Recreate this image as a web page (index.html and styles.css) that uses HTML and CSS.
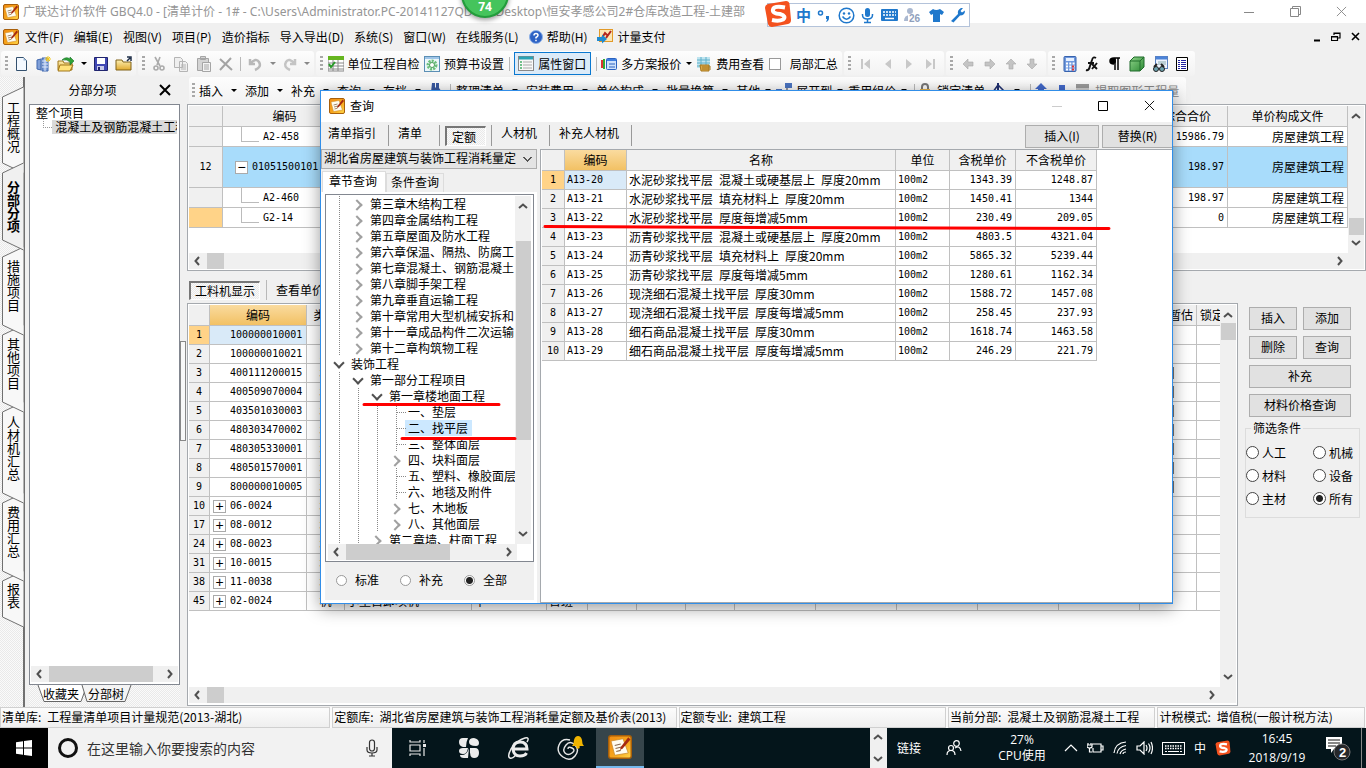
FILE: index.html
```html
<!DOCTYPE html>
<html lang="zh-CN">
<head>
<meta charset="utf-8">
<title>广联达计价软件 GBQ4.0</title>
<link rel="stylesheet" href="styles.css">
</head>
<body>
<svg class="defs" width="0" height="0" aria-hidden="true">
  <defs>
    <linearGradient id="gold" x1="0" y1="0" x2="1" y2="1"><stop offset="0" stop-color="#f08c12"/><stop offset=".55" stop-color="#f7a51c"/><stop offset="1" stop-color="#ffd84a"/></linearGradient>
    <linearGradient id="folder" x1="0" y1="0" x2="0" y2="1"><stop offset="0" stop-color="#fdf0b4"/><stop offset="1" stop-color="#e0a92e"/></linearGradient>
    <linearGradient id="green" x1="0" y1="0" x2="1" y2="1"><stop offset="0" stop-color="#8fd48a"/><stop offset="1" stop-color="#2c8a34"/></linearGradient>
  </defs>
  <symbol id="app" viewBox="0 0 16 16"><rect x=".5" y=".5" width="15" height="15" rx="1.5" fill="url(#gold)" stroke="#a85f0a"/><path d="M2 4l8-1.500 3.500 9.500-9 1.500z" fill="#fffdf0" stroke="#c98a2a" stroke-width=".5"/><path d="M4.500 7l4-1M5 9l4-1M5.500 11l3-.8" stroke="#8a6a50" stroke-width=".8"/><path d="M13.500 1.500L8.500 8 8 10l1.800-1L15 3z" fill="#a52a12"/></symbol>
  <symbol id="left" viewBox="0 0 8 10"><path d="M6 1L2.500 5 6 9" fill="none" stroke="#505050" stroke-width="2"/></symbol>
  <symbol id="right" viewBox="0 0 8 10"><path d="M2 1l3.500 4L2 9" fill="none" stroke="#505050" stroke-width="2"/></symbol>
  <symbol id="up" viewBox="0 0 10 8"><path d="M1 6l4-3.500L9 6" fill="none" stroke="#505050" stroke-width="2"/></symbol>
  <symbol id="down" viewBox="0 0 10 8"><path d="M1 2l4 3.500L9 2" fill="none" stroke="#505050" stroke-width="2"/></symbol>
  <symbol id="close" viewBox="0 0 12 12"><path d="M1 1l10 10M11 1L1 11" fill="none" stroke="currentColor"/></symbol>
  <symbol id="arrow" viewBox="0 0 12 12"><path d="M1 6l5-5v3h5v4H6v3z" fill="#c4c4c4" stroke="#a8a8a8" stroke-width=".6"/></symbol>
  <symbol id="sogou" viewBox="0 0 28 28"><path d="M4 4L22 1q3 0 3.500 3L27 20q0 3-3 4L8 27q-3 0-4-3L1 8q0-3 3-4z" fill="#f4511e"/><path d="M21 7.500q-11-2-12 2t7 4.500q7 2 3 5.500-4 2-11 .5" fill="none" stroke="#fff" stroke-width="4"/></symbol>
</svg>

<header class="titlebar">
  <svg class="i16"><use href="#app"/></svg>
  <span class="caption">广联达计价软件 GBQ4.0 - [清单计价 - 1# - C:\Users\Administrator.PC-20141127QDCM\Desktop\恒安孝感公司2#仓库改造工程-土建部</span>
  <div class="win-controls">
    <button aria-label="最小化"><svg width="10" height="10"><path d="M0 5.500h10" stroke="#888"/></svg></button>
    <button aria-label="还原"><svg width="11" height="11"><path d="M.5 2.500h8v8h-8zM2.500 2.500v-2h8v8h-2" fill="none" stroke="#888"/></svg></button>
    <button aria-label="关闭"><svg width="11" height="11"><use href="#close"/></svg></button>
  </div>
</header>

<div class="speed-badge">74</div>
<div class="ime">
  <svg class="ime-logo" width="30" height="28"><use href="#sogou"/></svg>
  <b>中</b>
  <svg width="14" height="14"><circle cx="3.500" cy="5" r="2" fill="none" stroke="#1f78cc" stroke-width="1.500"/><path d="M9 8h3v2q0 3-3 4 1-2 1-3H9z" fill="#1f78cc"/></svg>
  <svg width="17" height="17"><circle cx="8.500" cy="8.500" r="7.300" fill="none" stroke="#1f78cc" stroke-width="1.500"/><circle cx="6" cy="6.500" r="1.200" fill="#1f78cc"/><circle cx="11" cy="6.500" r="1.200" fill="#1f78cc"/><path d="M4.500 9.500q4 5.500 8 0" fill="none" stroke="#1f78cc" stroke-width="1.500"/></svg>
  <svg width="13" height="17"><rect x="4" y="1" width="5" height="9" rx="2.500" fill="#1f78cc"/><path d="M1.500 7v1q0 4 5 4t5-4V7M6.500 12v3M3 15.500h7" fill="none" stroke="#1f78cc" stroke-width="1.500"/></svg>
  <svg width="17" height="12"><rect width="17" height="12" rx="1" fill="#1f78cc"/><path d="M2 3h13M2 6h13" stroke="#fff" stroke-width="1.500" stroke-dasharray="2 1"/><path d="M4 9.500h9" stroke="#fff" stroke-width="1.500"/></svg>
  <svg width="18" height="16"><circle cx="6" cy="4" r="3" fill="#aab8d0"/><path d="M0 14q0-6 6-6 2 0 3 1v5z" fill="#aab8d0"/><path d="M4 7h14v9H4z" fill="#fff"/><text x="5" y="15" class="ime-num">26</text></svg>
  <svg width="15" height="15"><path d="M4 1q3 2 7 0l4 3-2 3-2-1v8H4V6L2 7 0 4z" fill="#1f78cc"/></svg>
  <svg width="15" height="15"><path d="M1 13l7-7q-1-4 3-6l2 0-2.500 3 1.500 1.500L15 2.500q0 5-5 5l-6.500 7z" fill="#1f78cc"/></svg>
</div>

<nav class="menubar">
  <svg class="i16"><use href="#app"/></svg>
  <button>文件(F)</button><button>编辑(E)</button><button>视图(V)</button><button>项目(P)</button><button>造价指标</button><button>导入导出(D)</button><button>系统(S)</button><button>窗口(W)</button><button>在线服务(L)</button>
  <button><svg width="14" height="14"><circle cx="7" cy="7" r="6.500" fill="#2d62c4" stroke="#8fb2e8"/><path d="M5 5.500q0-2 2-2t2 1.800q0 1-2 2.200v1M7 9.800v1.400" fill="none" stroke="#fff" stroke-width="1.500"/></svg>帮助(H)</button>
  <button><svg width="16" height="16"><rect x="2.500" y=".5" width="13" height="12" fill="#fbe6b4" stroke="#e29a28"/><path d="M5 9l3-5 2 2M14 2L9 9" fill="none" stroke="#b3261e" stroke-width="2"/><path d="M0 8h5V5.500l5 4.500-5 4.500V12H0z" fill="#1f8ad0"/></svg>计量支付</button>
  <div class="mdi">
    <button aria-label="最小化文档"><svg width="8" height="10"><path d="M1 8.500h6" stroke="#000" stroke-width="2"/></svg></button>
    <button aria-label="还原文档"><svg width="10" height="10"><path d="M3 3V1h6v5H7M3 1.500h6M.5 4.500h6v4h-6zM0 5h7" fill="none" stroke="#000" stroke-width="1.200"/></svg></button>
    <button aria-label="关闭文档"><svg width="9" height="9"><path d="M1 1l7 7M8 1L1 8" stroke="#000" stroke-width="1.600"/></svg></button>
  </div>
</nav>

<div class="toolbar">
  <div class="group g1"><i class="grip"></i>
    <button aria-label="新建"><svg class="i16"><path d="M2.500 1.500h7l3 3v10h-10z" fill="#f4f9ff" stroke="#33506e"/><path d="M9.500 1.500v3h3z" fill="#9bb7d4"/></svg></button>
    <button aria-label="新建项目"><svg class="i16"><path d="M1 4l4-1v11l-4-1zM6 2h6v13H6z" fill="#7f9fd8" stroke="#3f67ae"/><path d="M6 5h6M6 8h6M6 11h6M9 2v13" stroke="#dfe9fb"/><path d="M12 0v6M9 3h6M10 1l4 4M14 1l-4 4" stroke="#f2c81c"/></svg></button>
    <button aria-label="打开"><svg width="18" height="16"><path d="M1 5h5l1 2h8v7H1z" fill="url(#folder)" stroke="#a0761a"/><path d="M3 9h13l-3 6H1z" fill="#ffe27a" stroke="#a0761a"/><path d="M5 4q4-4 8-1V1l4 4-4 4V6q-3-3-8-2z" fill="#2ea336" stroke="#17702a" stroke-width=".6"/></svg></button>
    <i class="caret"></i>
    <button aria-label="保存"><svg class="i16"><path d="M1.500 1.500h13v13h-13z" fill="#4148b4" stroke="#20246e"/><rect x="4" y="2" width="8" height="6" fill="#fff"/><rect x="4" y="10" width="7" height="4" fill="#c9cbe9"/><rect x="5" y="11" width="2" height="3" fill="#20246e"/></svg></button>
    <button aria-label="目录"><svg width="17" height="16"><path d="M1 4h6l1 2h8v8H1z" fill="url(#folder)" stroke="#806218"/><path d="M12 5l3-3M12 1h4v4" stroke="#20304a" fill="none" stroke-width="1.500"/></svg></button>
  </div>
  <div class="group g2"><i class="grip"></i>
    <button aria-label="剪切"><svg class="i16" stroke="#ababab" fill="none" stroke-width="1.600"><path d="M4 1l5 9M9 1L6 9"/><circle cx="5" cy="12" r="2"/><circle cx="11" cy="12" r="2"/></svg></button>
    <button aria-label="复制"><svg class="i16" stroke="#b4b4b4" fill="#efefef"><path d="M1.500 1.500h6l2 2v8h-8zM6.500 5.500h6l2 2v8h-8z"/><path d="M8 9h5M8 11h5M8 13h5"/></svg></button>
    <button aria-label="粘贴"><svg class="i16" stroke="#a5a5a5" fill="#d4d4d4"><path d="M1.500 2.500h11v12h-11zM4.500.5h5v3h-5z"/><path d="M6.500 6.500h8v9h-8z" fill="#f4f4f4"/><path d="M8 9h5M8 11h5M8 13h5"/></svg></button>
    <button aria-label="删除"><svg class="i16"><path d="M2 3l12 11M13 2L2 14" stroke="#a4a4a4" stroke-width="2"/></svg></button>
    <i class="sep"></i>
    <button aria-label="撤销"><svg class="i16"><path d="M3 3v5h5M3 8q6-7 9-2t-4 8" fill="none" stroke="#b8b8b8" stroke-width="2.500"/></svg></button><i class="caret dim"></i>
    <button aria-label="重做"><svg class="i16"><path d="M13 3v5H8M13 8Q7 1 4 6t4 8" fill="none" stroke="#c4c4c4" stroke-width="2.500"/></svg></button><i class="caret dim"></i>
  </div>
  <div class="group g3"><i class="grip"></i>
    <button class="lbl"><svg class="i16"><rect y="1" width="16" height="14" fill="#fff" stroke="#888"/><rect width="16" height="4" fill="#65b51f"/><path d="M0 7h16M0 10h16M0 13h16M5 4v11M10 4v11" stroke="#888"/><path d="M1 8l2 3 4-5" stroke="#299a29" stroke-width="2" fill="none"/></svg>单位工程自检</button>
    <button class="lbl"><svg class="i16"><rect x=".5" y=".5" width="15" height="15" fill="#edf7fa" stroke="#5b8fb5"/><path d="M1 2h14" stroke="#9fc5e8" stroke-width="2"/><circle cx="8" cy="9" r="4" fill="none" stroke="#6abf7a" stroke-width="3" stroke-dasharray="2 1"/><circle cx="8" cy="9" r="2.500" fill="#fff" stroke="#4aa05a"/></svg>预算书设置</button>
    <i class="sep"></i>
    <button class="lbl pressed"><svg class="i16"><rect x=".5" y=".5" width="15" height="14" fill="#f8f8f8" stroke="#888"/><path d="M1 2h14" stroke="#29a3b5" stroke-width="3"/><path d="M2 6h2M2 9h2M2 12h2" stroke="#46ad67" stroke-width="1.500"/><path d="M5 6h9M5 9h9M5 12h9" stroke="#aaa"/></svg>属性窗口</button>
    <i class="sep"></i>
    <button class="lbl"><svg class="i16"><path d="M1 4v8" stroke="#d33" stroke-width="2"/><path d="M3 3v10" stroke="#3a3" stroke-width="2"/><rect x="5.500" y="2.500" width="10" height="11" rx="1" fill="#cfe2fb" stroke="#2a62c0"/><path d="M6 4h9" stroke="#3f7fe0" stroke-width="2"/><path d="M8 8h6M8 11h6" stroke="#2a62c0"/></svg>多方案报价</button><i class="caret"></i>
    <button class="lbl"><svg class="i16"><rect x="1" y="1" width="13" height="11" fill="#bfe4ef"/><path d="M1 4h13M1 7h13M1 10h13M5 1v11M10 1v11" stroke="#5fb0ca"/><path d="M4 9h9v6H5z" fill="#dba948" stroke="#a6761c"/><path d="M6 11h9M6 13h9" stroke="#a6761c"/></svg>费用查看</button>
    <label class="lbl"><input type="checkbox" class="box">局部汇总</label>
  </div>
  <div class="group g4"><i class="grip"></i>
    <button aria-label="首条"><svg class="i12" fill="#c8c8c8"><path d="M1 1h2v10H1zM10 1v10L4 6z"/></svg></button>
    <button aria-label="上一条"><svg class="i12" fill="#c8c8c8"><path d="M9 1v10L3 6z"/></svg></button>
    <button aria-label="下一条"><svg class="i12" fill="#c8c8c8"><path d="M3 1v10l6-5z"/></svg></button>
    <button aria-label="末条"><svg class="i12" fill="#c8c8c8"><path d="M9 1h2v10H9zM2 1v10l6-5z"/></svg></button>
  </div>
  <div class="group g4"><i class="grip"></i>
    <button aria-label="左移"><svg class="i12"><use href="#arrow"/></svg></button>
    <button aria-label="右移"><svg class="i12 r180"><use href="#arrow"/></svg></button>
    <button aria-label="上移"><svg class="i12 r90"><use href="#arrow"/></svg></button>
    <button aria-label="下移"><svg class="i12 r270"><use href="#arrow"/></svg></button>
  </div>
  <div class="group g5"><i class="grip"></i>
    <button aria-label="计算器"><svg class="i16"><rect x="2" y=".5" width="12" height="15" rx="1" fill="#6f98dd" stroke="#3762ad"/><rect x="4" y="2" width="8" height="3" fill="#e6f0ff"/><path d="M4 7.500h9M4 10.500h9M4 13.500h9" stroke="#fff" stroke-width="2" stroke-dasharray="2 1.300"/><path d="M10 10.500h2M10 13.500h2" stroke="#d33" stroke-width="2"/></svg></button>
    <button aria-label="函数"><svg class="i16"><path d="M2 14q3 1 4-4l2-6q1-4 4-2M4 7h6M8 8l5 5M13 7l-5 6" fill="none" stroke="#111" stroke-width="1.900"/></svg></button>
    <button aria-label="段落"><svg class="i16"><path d="M7 8Q3 8 3 5t4-3h6M8 2v12M11 2v12" fill="none" stroke="#000" stroke-width="1.500"/><circle cx="6" cy="5" r="3"/></svg></button>
    <button aria-label="立方体"><svg class="i16"><path d="M1 5l4-4h10v10l-4 4H1z" fill="url(#green)" stroke="#1f6a2a"/><path d="M1 5h10v10M11 5l4-4" fill="none" stroke="#226f2d"/></svg></button>
    <button aria-label="查找"><svg class="i16"><rect x="3.500" y=".5" width="12" height="12" fill="#edf3ff" stroke="#5a80bd"/><path d="M4 2h11" stroke="#4b83d8" stroke-width="3"/><path d="M6 6h8M6 8h8" stroke="#8aa"/><circle cx="4" cy="13" r="2.500" fill="#6da3b0" stroke="#222"/><circle cx="10" cy="13" r="2.500" fill="#6da3b0" stroke="#222"/><path d="M2 11l3-3M12 11l-3-3" stroke="#222" stroke-width="2"/></svg></button>
    <button aria-label="列表"><svg class="i16"><path d="M2.500 1.500h11v13h-11z" fill="#fff" stroke="#000"/><path d="M4 4.500h2M4 6.500h2M4 8.500h2M4 10.500h2M4 12.500h2M7 4.500h5M7 6.500h5M7 8.500h5M7 10.500h5M7 12.500h5" stroke="#2020a0"/></svg></button>
  </div>
</div>

<main class="work">
  <aside class="side-tabs">
    <svg class="tab-shapes" width="24" height="560" fill="#f8f8f8" stroke="#707070">
      <path d="M23.500 484L2.500 494V530L23.500 540"/><path d="M23.500 406L2.500 416V484L23.500 494"/><path d="M23.500 315L2.500 325V406L23.500 416"/><path d="M23.500 238L2.500 248V315L23.500 325"/><path d="M23.500 160L2.500 170V238L23.500 248"/><path d="M23.500 0L2.500 10V76L23.500 86"/>
      <path d="M23.500 76L2.500 86V153L23.500 163" fill="#f0f0f0"/>
    </svg>
    <button class="t80">工程概况</button><button class="t80 on">分部分项</button><button class="t78">措施项目</button><button class="t78">其他项目</button><button class="t90">人材机汇总</button><button class="t78">费用汇总</button><button class="t50">报表</button>
  </aside>

  <section class="outline">
    <h2>分部分项<button aria-label="关闭面板"><svg width="12" height="12"><path d="M1 1l10 10M11 1L1 11" stroke="#000" stroke-width="2"/></svg></button></h2>
    <div class="outline-box">
      <ul><li>整个项目<ul><li><span>混凝土及钢筋混凝土工程</span></li></ul></li></ul>
      <div class="hscroll"><svg class="ah"><use href="#left"/></svg><i class="thumb t103"></i><svg class="ah end"><use href="#right"/></svg></div>
    </div>
    <div class="sheet-tabs">
      <svg width="100" height="18" fill="#f4f4f4" stroke="#666"><path d="M1 0l6 16.500h37L50 0" fill="#fff"/><path d="M45 0l5 16.500h38L94 0"/></svg>
      <button>收藏夹</button><button>分部树</button>
    </div>
  </section>
  <div class="splitter"><i></i></div>

  <section class="content">
    <div class="toolbar second">
      <i class="grip"></i>
      <button class="dd">插入</button><button class="dd">添加</button><button class="dd">补充</button><button class="dd">查询</button><button class="dd">存档</button>
      <button aria-label="查找"><svg class="i16" fill="#3858a0"><path d="M3 0h3v4l1 1V0h3v5l3 4v4H9v-4H7v4H2v-4z"/></svg></button><i class="sep"></i>
      <button class="dd">整理清单</button><button class="dd">安装费用</button><button class="dd">单价构成</button><button class="dd">批量换算</button><button class="dd tight">其他</button>
      <button class="dd tight"><svg class="i16"><rect x="9" y="0" width="7" height="5" fill="#4a73c0"/><rect x="0" y="6" width="6" height="6" fill="#4a73c0"/><path d="M6 8h5M11 5v6" stroke="#334"/></svg>展开到</button><button class="dd tight">重用组价</button><i class="sep slim"></i>
      <button class="ic"><svg class="i16"><path d="M5 8V4q0-3 3-3t3 3v4" fill="none" stroke="#777" stroke-width="2"/><rect x="3" y="6" width="10" height="8" fill="#e2b04a"/></svg>锁定清单</button>
      <button class="dd" aria-label="填充"><svg class="i16"><path d="M3 9l5-7 6 6-6 6z" fill="#fff" stroke="#203070" stroke-width="1.500"/><path d="M8 0v7M13 8l2 5" stroke="#203070" stroke-width="2"/></svg></button><i class="sep slim"></i>
      <button class="ic" aria-label="上移"><svg class="i16"><path d="M8 0l6 6h-3v6H5V6H2z" fill="#4268c8"/></svg></button>
      <button class="ic" aria-label="下移"><svg class="i16"><path d="M8 14L2 9h3V2h6v7h3z" fill="#4268c8"/></svg></button>
      <button class="ic off"><svg class="i16"><path d="M1 1h13v13H1z" fill="#ccc"/><path d="M1 3h13" stroke="#999" stroke-width="4"/></svg>提取图形工程量</button>
    </div>

    <div class="grid-box top-grid">
      <div class="grid-view">
        <table class="sheet">
          <colgroup><col class="c33"><col class="c124"><col><col class="c119"><col class="c120"></colgroup>
          <thead><tr><th></th><th>编码</th><th></th><th class="total">综合合价</th><th>单价构成文件</th></tr></thead>
          <tbody>
            <tr><th></th><td class="kid last">A2-458</td><td></td><td class="r n">15986.79</td><td class="r">房屋建筑工程</td></tr>
            <tr class="tall sel"><th>12</th><td class="root"><button class="pm" aria-label="折叠">−</button>01051500101</td><td></td><td class="r n">198.97</td><td class="r">房屋建筑工程</td></tr>
            <tr><th></th><td class="kid">A2-460</td><td></td><td class="r n">198.97</td><td class="r">房屋建筑工程</td></tr>
            <tr><th class="cur"></th><td class="kid last">G2-14</td><td></td><td class="r n">0</td><td class="r">房屋建筑工程</td></tr>
          </tbody>
        </table>
      </div>
      <div class="vscroll"><svg class="av"><use href="#up"/></svg><i class="thumb end"></i><svg class="av"><use href="#down"/></svg></div>
      <div class="hscroll"><svg class="ah"><use href="#left"/></svg><i class="thumb t17"></i><svg class="ah end"><use href="#right"/></svg></div>
    </div>

    <div class="view-bar"><button class="down">工料机显示</button><i class="sep"></i><button>查看单价</button></div>

    <div class="lower">
      <div class="grid-box bottom-grid">
        <div class="grid-view">
          <table class="sheet low">
            <colgroup><col class="c20"><col class="c97"><col class="c38"><col class="c127"><col class="c75"><col class="c41"><col class="c49"><col class="c49"><col class="c49"><col class="c81"><col class="c81"><col class="c81"><col class="c81"><col class="c81"><col class="c57"><col></colgroup>
            <thead><tr><th></th><th class="hot">编码</th><th>类别</th><th></th><th></th><th></th><th></th><th></th><th></th><th></th><th></th><th></th><th></th><th></th><th class="r">是否暂估</th><th class="lock">锁定</th></tr></thead>
            <tbody>
              <tr><th class="cur">1</th><td class="code hit">100000010001</td><td>人</td><td></td><td></td><td></td><td></td><td></td><td></td><td></td><td></td><td></td><td></td><td></td><td></td><td></td></tr>
              <tr><th>2</th><td class="code">100000010021</td><td>人</td><td></td><td></td><td></td><td></td><td></td><td></td><td></td><td></td><td></td><td></td><td></td><td></td><td></td></tr>
              <tr><th>3</th><td class="code">400111200015</td><td>材</td><td></td><td></td><td></td><td></td><td></td><td></td><td></td><td></td><td></td><td></td><td></td><td><input type="checkbox" class="box" aria-label="暂估 3"></td><td></td></tr>
              <tr><th>4</th><td class="code">400509070004</td><td>材</td><td></td><td></td><td></td><td></td><td></td><td></td><td></td><td></td><td></td><td></td><td></td><td><input type="checkbox" class="box" aria-label="暂估 4"></td><td></td></tr>
              <tr><th>5</th><td class="code">403501030003</td><td>材</td><td></td><td></td><td></td><td></td><td></td><td></td><td></td><td></td><td></td><td></td><td></td><td><input type="checkbox" class="box" aria-label="暂估 5"></td><td></td></tr>
              <tr><th>6</th><td class="code">480303470002</td><td>材</td><td></td><td></td><td></td><td></td><td></td><td></td><td></td><td></td><td></td><td></td><td></td><td><input type="checkbox" class="box" aria-label="暂估 6"></td><td></td></tr>
              <tr><th>7</th><td class="code">480305330001</td><td>材</td><td></td><td></td><td></td><td></td><td></td><td></td><td></td><td></td><td></td><td></td><td></td><td><input type="checkbox" class="box" aria-label="暂估 7"></td><td></td></tr>
              <tr><th>8</th><td class="code">480501570001</td><td>材</td><td></td><td></td><td></td><td></td><td></td><td></td><td></td><td></td><td></td><td></td><td></td><td><input type="checkbox" class="box" aria-label="暂估 8"></td><td></td></tr>
              <tr><th>9</th><td class="code">800000010005</td><td>材</td><td></td><td></td><td></td><td></td><td></td><td></td><td></td><td></td><td></td><td></td><td></td><td><input type="checkbox" class="box" aria-label="暂估 9"></td><td></td></tr>
              <tr><th>10</th><td class="code"><button class="pm" aria-label="展开">+</button>06-0024</td><td>机</td><td></td><td></td><td></td><td></td><td></td><td></td><td></td><td></td><td></td><td></td><td></td><td></td><td></td></tr>
              <tr><th>17</th><td class="code"><button class="pm" aria-label="展开">+</button>08-0012</td><td>机</td><td></td><td></td><td></td><td></td><td></td><td></td><td></td><td></td><td></td><td></td><td></td><td></td><td></td></tr>
              <tr><th>24</th><td class="code"><button class="pm" aria-label="展开">+</button>08-0023</td><td>机</td><td></td><td></td><td></td><td></td><td></td><td></td><td></td><td></td><td></td><td></td><td></td><td></td><td></td></tr>
              <tr><th>31</th><td class="code"><button class="pm" aria-label="展开">+</button>10-0015</td><td>机</td><td></td><td></td><td></td><td></td><td></td><td></td><td></td><td></td><td></td><td></td><td></td><td></td><td></td></tr>
              <tr><th>38</th><td class="code"><button class="pm" aria-label="展开">+</button>11-0038</td><td>机</td><td></td><td></td><td></td><td></td><td></td><td></td><td></td><td></td><td></td><td></td><td></td><td></td><td></td></tr>
              <tr><th>45</th><td class="code"><button class="pm" aria-label="展开">+</button>02-0024</td><td>机</td><td class="l">小型自卸项机</td><td class="l">中</td><td class="l">台班</td><td></td><td></td><td></td><td></td><td></td><td></td><td></td><td></td><td></td><td></td></tr>
            </tbody>
          </table>
        </div>
        <div class="vscroll"><svg class="av"><use href="#up"/></svg><i class="thumb"></i><svg class="av end"><use href="#down"/></svg></div>
        <div class="hscroll"><svg class="ah"><use href="#left"/></svg><i class="thumb t17"></i><svg class="ah end"><use href="#right"/></svg></div>
      </div>

      <aside class="actions">
        <div class="action-grid">
          <button class="btn">插入</button><button class="btn">添加</button>
          <button class="btn">删除</button><button class="btn">查询</button>
          <button class="btn wide">补充</button>
          <button class="btn wide">材料价格查询</button>
        </div>
        <fieldset><legend>筛选条件</legend>
          <label><input type="radio" name="kind">人工</label><label><input type="radio" name="kind">机械</label>
          <label><input type="radio" name="kind">材料</label><label><input type="radio" name="kind">设备</label>
          <label><input type="radio" name="kind">主材</label><label><input type="radio" name="kind" checked>所有</label>
        </fieldset>
      </aside>
    </div>
  </section>
</main>

<div class="status">
  <span>清单库:&ensp;工程量清单项目计量规范(2013-湖北)</span><span>定额库:&ensp;湖北省房屋建筑与装饰工程消耗量定额及基价表(2013)</span><span>定额专业:&ensp;建筑工程</span><span>当前分部:&ensp;混凝土及钢筋混凝土工程</span><span>计税模式:&ensp;增值税(一般计税方法)</span>
</div>

<footer class="taskbar">
  <button class="start" aria-label="开始"><svg width="16" height="16" fill="#fff"><path d="M0 2.300l7-1v6.200H0zM8 1.100l8-1.100v7.500H8zM0 8.500h7v6.200l-7-1zM8 8.500h8V16l-8-1.100z"/></svg></button>
  <div class="search"><svg width="22" height="22"><circle cx="11" cy="11" r="8.500" fill="none" stroke="#111" stroke-width="3"/></svg><input type="text" placeholder="在这里输入你要搜索的内容" aria-label="搜索"><svg width="12" height="18" fill="none" stroke="#333" stroke-width="1.200"><rect x="3.500" y="1" width="5" height="11" rx="2.500"/><path d="M1 8v3q0 3 5 3t5-3V8M6 14v3M3 17h6"/></svg></div>
  <button class="task" aria-label="任务视图"><svg width="18" height="16" fill="none" stroke="#e8e8e8" stroke-width="1.200"><path d="M1 0v2h10V0M1 5h10v6H1zM1 16v-2h10v2M15 0v3M15 8v8"/><path d="M14 5.500h3" stroke-width="3"/></svg></button>
  <button class="task" aria-label="浏览器"><svg width="22" height="22" fill="#ececec"><path d="M10 1H5Q1 1 1 5t4 5h3q0-5 2-9zM11 5q0-4 5-4 5 1 5 5 0 3-3 3-7 0-7-4zM10 11H5q-4 0-4 3t4 3q4 0 5-6zM10 21H6q-4 0-4-3 7 1 9-7zM12 11h5q4 0 4 5t-5 5q-5 0-4-10z"/></svg></button>
  <button class="task" aria-label="IE"><svg width="23" height="23" fill="none" stroke="#ececec"><path d="M5 12h14q0-7-7-7t-7 7.500q1 6.500 7 6.500 5 0 6.500-3" stroke-width="3"/><path d="M19 5q3-5-2-4Q9 3 3 12q-4 8-1 9 2 1 5-2" stroke-width="1.500"/></svg></button>
  <button class="task" aria-label="通知"><svg width="28" height="26" fill="none"><path d="M13 5Q5 3 2 10t4 12 12-1 0-11-9 0-1 8 7 0 0-5-4 1" stroke="#e8e8e8" stroke-width="1.400"/><path d="M15 11q2-2 2-6 1-4 4-4t4 4q0 4 2 6z" fill="#f0b400"/><circle cx="21" cy="12" r="1.800" fill="#f0b400"/></svg></button>
  <button class="task live" aria-label="GBQ"><svg width="24" height="24"><use href="#app"/></svg></button>
  <div class="band"><svg class="av"><use href="#up"/></svg><svg class="av"><use href="#down"/></svg></div>
  <span class="links">链接</span>
  <svg class="people" width="16" height="16" fill="none" stroke="#fff" stroke-width="1.200"><circle cx="10.500" cy="3.500" r="2.800"/><circle cx="5" cy="8" r="2.500"/><path d="M1 15q0-4.500 4-4.500T9 15M9 8q5-3 6 3"/></svg>
  <span class="cpu">27%<br>CPU使用</span>
  <div class="tray">
    <svg width="14" height="10"><path d="M1 8l6-6 6 6" fill="none" stroke="#fff" stroke-width="1.200"/></svg>
    <svg width="17" height="12" fill="none" stroke="#fff" stroke-width="1.200"><path d="M5 2h9v8H6V6M14 4h2v4h-2M1 1v2M4 1v2M0 3h5v2q-2 2-5 0zM2.500 6v4H5"/></svg>
    <svg width="14" height="14" fill="none" stroke="#fff" stroke-width="1.200"><path d="M1 12Q2 2 13 1M4 12.500Q5 6 13 4.500M7 13q1-4 6-5M10 13q0-2 3-2"/></svg>
    <svg width="17" height="14" fill="none" stroke="#fff" stroke-width="1.200"><path d="M1 5h3l4-4v12L4 9H1zM10 4q2 3 0 6M12.500 2.500q3 4.500 0 9M15 1q3 6 0 12"/></svg>
    <svg width="23" height="13"><rect x=".5" y=".5" width="22" height="12" fill="none" stroke="#fff"/><path d="M3 4h17M3 6.500h17" stroke="#fff" stroke-width="1.500" stroke-dasharray="1.500 1"/><path d="M3 9.500h2M6 9.500h11M18 9.500h2" stroke="#fff"/></svg>
    <span>中</span>
    <svg width="16" height="16"><use href="#sogou"/></svg>
  </div>
  <span class="clock">16:45<br>2018/9/19</span>
  <button class="notes" aria-label="通知中心"><svg width="26" height="26"><path d="M1 2h16v12H9l-3 4v-4H1z" fill="#fff"/><path d="M3 5h12M3 8h12M3 11h8" stroke="#111"/><circle cx="17" cy="17" r="8" fill="#26282b" stroke="#777"/><text x="14" y="22" class="note-num">2</text></svg></button>
</footer>

<section class="dialog" role="dialog" aria-label="查询">
  <div class="dlg-title"><svg class="i16"><use href="#app"/></svg><span>查询</span>
    <div class="win-controls dark">
      <button aria-label="最小化"><svg width="10" height="10"><path d="M0 5.500h10" stroke="#ccc"/></svg></button>
      <button aria-label="最大化"><svg width="10" height="10"><path d="M.5.5h9v9h-9z" fill="none" stroke="#000"/></svg></button>
      <button aria-label="关闭"><svg width="11" height="11"><use href="#close"/></svg></button>
    </div>
  </div>
  <div class="dlg-tabs">
    <button>清单指引</button><button class="roomy">清单</button><button class="on"><span>定额</span></button><button>人材机</button><button>补充人材机</button>
    <div class="dlg-actions"><button class="btn">插入(I)</button><button class="btn">替换(R)</button></div>
  </div>
  <div class="dlg-body">
    <div class="chapter">
      <select aria-label="定额库"><option>湖北省房屋建筑与装饰工程消耗量定</option></select>
      <div class="page-tabs"><button class="on">章节查询</button><button>条件查询</button></div>
      <div class="page">
        <div class="tree-box">
          <div class="tree">
            <div><i class="g"></i><i class="more"></i>第三章木结构工程</div>
            <div><i class="g"></i><i class="more"></i>第四章金属结构工程</div>
            <div><i class="g"></i><i class="more"></i>第五章屋面及防水工程</div>
            <div><i class="g"></i><i class="more"></i>第六章保温、隔热、防腐工</div>
            <div><i class="g"></i><i class="more"></i>第七章混凝土、钢筋混凝土</div>
            <div><i class="g"></i><i class="more"></i>第八章脚手架工程</div>
            <div><i class="g"></i><i class="more"></i>第九章垂直运输工程</div>
            <div><i class="g"></i><i class="more"></i>第十章常用大型机械安拆和</div>
            <div><i class="g"></i><i class="more"></i>第十一章成品构件二次运输</div>
            <div><i class="g"></i><i class="more"></i>第十二章构筑物工程</div>
            <div><i class="open"></i>装饰工程</div>
            <div><i class="g"></i><i class="open"></i>第一部分工程项目</div>
            <div><i class="g"></i><i class="g"></i><i class="open"></i>第一章楼地面工程</div>
            <div><i class="g"></i><i class="g"></i><i class="g"></i><i class="g tick"></i>一、垫层</div>
            <div><i class="g"></i><i class="g"></i><i class="g"></i><i class="g tick"></i><span>二、找平层</span></div>
            <div><i class="g"></i><i class="g"></i><i class="g"></i><i class="g tick"></i>三、整体面层</div>
            <div><i class="g"></i><i class="g"></i><i class="g"></i><i class="more"></i>四、块料面层</div>
            <div><i class="g"></i><i class="g"></i><i class="g"></i><i class="g tick"></i>五、塑料、橡胶面层</div>
            <div><i class="g"></i><i class="g"></i><i class="g"></i><i class="g tick"></i>六、地毯及附件</div>
            <div><i class="g"></i><i class="g"></i><i class="g"></i><i class="more"></i>七、木地板</div>
            <div><i class="g"></i><i class="g"></i><i class="g"></i><i class="more"></i>八、其他面层</div>
            <div><i class="g"></i><i class="g"></i><i class="more"></i>第二章墙、柱面工程</div>
          </div>
          <div class="vscroll"><svg class="av"><use href="#up"/></svg><i class="thumb long"></i><svg class="av end"><use href="#down"/></svg></div>
          <div class="hscroll"><svg class="ah"><use href="#left"/></svg><i class="thumb t103"></i><svg class="ah end"><use href="#right"/></svg></div>
        </div>
        <div class="scope"><label><input type="radio" name="scope">标准</label><label><input type="radio" name="scope">补充</label><label><input type="radio" name="scope" checked>全部</label></div>
      </div>
    </div>
    <div class="quota">
      <table class="sheet">
        <colgroup><col class="c22"><col class="c62"><col class="c268"><col class="c55"><col class="c66"><col class="c80"></colgroup>
        <thead><tr><th></th><th class="hot">编码</th><th>名称</th><th>单位</th><th>含税单价</th><th>不含税单价</th></tr></thead>
        <tbody>
          <tr><th class="cur">1</th><td class="n hit">A13-20</td><td>水泥砂浆找平层&ensp;混凝土或硬基层上&ensp;厚度20mm</td><td class="n">100m2</td><td class="r n">1343.39</td><td class="r n">1248.87</td></tr>
          <tr><th>2</th><td class="n">A13-21</td><td>水泥砂浆找平层&ensp;填充材料上&ensp;厚度20mm</td><td class="n">100m2</td><td class="r n">1450.41</td><td class="r n">1344</td></tr>
          <tr><th>3</th><td class="n">A13-22</td><td>水泥砂浆找平层&ensp;厚度每增减5mm</td><td class="n">100m2</td><td class="r n">230.49</td><td class="r n">209.05</td></tr>
          <tr><th>4</th><td class="n">A13-23</td><td>沥青砂浆找平层&ensp;混凝土或硬基层上&ensp;厚度20mm</td><td class="n">100m2</td><td class="r n">4803.5</td><td class="r n">4321.04</td></tr>
          <tr><th>5</th><td class="n">A13-24</td><td>沥青砂浆找平层&ensp;填充材料上&ensp;厚度20mm</td><td class="n">100m2</td><td class="r n">5865.32</td><td class="r n">5239.44</td></tr>
          <tr><th>6</th><td class="n">A13-25</td><td>沥青砂浆找平层&ensp;厚度每增减5mm</td><td class="n">100m2</td><td class="r n">1280.61</td><td class="r n">1162.34</td></tr>
          <tr><th>7</th><td class="n">A13-26</td><td>现浇细石混凝土找平层&ensp;厚度30mm</td><td class="n">100m2</td><td class="r n">1588.72</td><td class="r n">1457.08</td></tr>
          <tr><th>8</th><td class="n">A13-27</td><td>现浇细石混凝土找平层&ensp;厚度每增减5mm</td><td class="n">100m2</td><td class="r n">258.45</td><td class="r n">237.93</td></tr>
          <tr><th>9</th><td class="n">A13-28</td><td>细石商品混凝土找平层&ensp;厚度30mm</td><td class="n">100m2</td><td class="r n">1618.74</td><td class="r n">1463.58</td></tr>
          <tr><th>10</th><td class="n">A13-29</td><td>细石商品混凝土找平层&ensp;厚度每增减5mm</td><td class="n">100m2</td><td class="r n">246.29</td><td class="r n">221.79</td></tr>
        </tbody>
      </table>
    </div>
  </div>
  <svg class="marks" width="850" height="512" fill="none" stroke="#f00" stroke-width="3" stroke-linecap="round"><path d="M224 135.500L460 136.500 788 137.500M43 313.500h135M81 347.500h113"/></svg>
</section>
</body>
</html>
```
FILE: styles.css
```css
* { box-sizing: border-box; }
html, body { height: 100%; }
body {
  margin: 0; display: flex; flex-direction: column; overflow: hidden; position: relative;
  background: #f0f0f0; color: #000;
  font: 12px/16px "Noto Sans CJK SC", sans-serif;
}
button, input, select { font: inherit; color: inherit; margin: 0; }
button { background: none; border: 0; padding: 0; white-space: nowrap; }
svg { flex: none; display: block; }
i { flex: none; }
.defs { position: absolute; }
.i16 { width: 16px; height: 16px; }
.i12 { width: 12px; height: 12px; }
.r180 { transform: rotate(180deg); }
.r90 { transform: rotate(90deg); }
.r270 { transform: rotate(270deg); }

/* title bar */
.titlebar { flex: none; height: 23px; background: #fff; display: flex; align-items: center; padding-left: 3px; color: #959595; }
.caption { margin-left: 4px; white-space: nowrap; width: 744px; overflow: hidden; font-family: "Noto Sans", "Noto Sans CJK SC", sans-serif; }
.win-controls { margin-left: auto; display: flex; color: #888; }
.win-controls button { width: 46px; height: 22px; display: flex; align-items: center; justify-content: center; }
.win-controls.dark { color: #000; }
.titlebar .win-controls { padding-right: 2px; }
.speed-badge {
  position: absolute; left: 461px; top: -30px; width: 48px; height: 48px; border-radius: 50%;
  background: #45c45c; border: 2px solid #239c3c; color: #fff; text-align: center; padding-top: 27px;
  font: bold 12px/16px "Open Sans", sans-serif; box-shadow: 0 2px 5px #0006;
}
.ime {
  position: absolute; left: 767px; top: 3px; height: 24px; width: 203px; background: #fff; border: 1px solid #b4c3da;
  display: flex; align-items: center; justify-content: space-between; padding: 0 4px 0 28px; color: #1f78cc; font-size: 15px;
}
.ime-logo { position: absolute; left: -5px; top: -4px; }
.ime-num { font: bold 10px "Liberation Sans", sans-serif; fill: #8fa0bc; }

/* menu */
.menubar { flex: none; height: 27px; display: flex; align-items: center; gap: 10px; padding-left: 3px; }
.menubar button { display: flex; align-items: center; gap: 4px; }
.menubar > svg { margin-right: -4px; }
.mdi { margin-left: auto; display: flex; gap: 10px; padding-right: 6px; }

/* toolbars */
.toolbar { flex: none; height: 27px; display: flex; gap: 2px; padding: 1px 0 0 1px; }
.group, .second { background: linear-gradient(#fdfdfd, #f2f2f2); border-radius: 3px; display: flex; align-items: center; }
.group { justify-content: space-between; padding: 0 4px; height: 25px; white-space: nowrap; }
.g1 { width: 135px; }
.g2 { width: 176px; }
.g3 { width: 526px; }
.g4 { width: 100px; padding-right: 8px; }
.g5 { width: 147px; padding-right: 5px; }
.grip { width: 3px; height: 15px; background: repeating-linear-gradient(#a8a8a8 0 2px, transparent 2px 4px); }
.sep { width: 1px; height: 14px; background: #b8b8b8; }
.caret { width: 0; height: 0; border: 3px solid transparent; border-top-color: #000; border-bottom: 0; }
.dim { border-top-color: #888; }
.lbl { display: flex; align-items: center; gap: 4px; }
.pressed { height: 23px; background: #dcebf8; border: 1px solid #0a78d0; padding: 0 4px 0 3px; }
.box { appearance: none; width: 12px; height: 12px; border: 1px solid #777; background: #fff; display: block; }
.lbl .box { margin-right: 5px; border-color: #999; }
.second { margin: 0 180px 0 2px; gap: 0; padding: 0 3px; height: 27px; }
.second .grip { margin-right: 4px; }
.second .sep { margin: 0 5px; }
.second .slim { margin: 0 2px; }
.dd { display: flex; align-items: center; gap: 4px; }
.dd::after { content: ""; margin: 0 8px 0 4px; border: 3px solid transparent; border-top-color: #000; border-bottom: 0; }
.tight::after { margin: 0 5px 0 1px; }
.ic { display: flex; align-items: center; gap: 4px; margin-right: 5px; }
.off { color: #888; }

/* work area */
.work { flex: 1; min-height: 0; display: flex; }
.side-tabs {
  flex: none; width: 25px; border-right: 2px solid #707070; padding-top: 9px; position: relative;
  background: repeating-conic-gradient(#e9e9e9 0 25%, #fafafa 0 50%) 0 0 / 2px 2px;
}
.tab-shapes { position: absolute; left: 0; top: 10px; }
.side-tabs button { position: relative; display: flex; align-items: center; width: 22px; padding: 0 2px 0 7px; white-space: normal; word-break: break-all; font-size: 13px; line-height: 13px; }
.side-tabs .on { font-weight: bold; }
.t80 { height: 80px; }
.t78 { height: 78px; }
.t90 { height: 90px; }
.t50 { height: 50px; }
.outline { flex: none; width: 155px; padding-left: 4px; display: flex; flex-direction: column; }
.outline h2 { margin: 0; height: 27px; font: inherit; text-align: center; line-height: 26px; padding-right: 24px; position: relative; }
.outline h2 button { position: absolute; right: 9px; top: 7px; }
.outline-box { flex: 1; min-height: 0; border: 1px solid #828790; background: #fff; padding: 1px 1px 2px; display: flex; flex-direction: column; overflow: hidden; }
.outline ul { margin: 0; padding: 0 0 0 5px; list-style: none; white-space: nowrap; line-height: 14px; }
.outline ul ul { padding-left: 7px; }
.outline ul ul li { display: flex; align-items: center; }
.outline ul ul li::before { content: ""; width: 9px; height: 8px; margin: -8px 0 0; border: dotted #999; border-width: 0 0 1px 1px; }
.outline ul span { background: #d9d9d9; padding-left: 3px; margin-right: 1px; overflow: hidden; }
.outline .hscroll { margin-top: auto; }
.sheet-tabs {
  height: 22px; position: relative; display: flex; padding-left: 14px; gap: 9px; line-height: 16px;
  background: repeating-conic-gradient(#e9e9e9 0 25%, #fafafa 0 50%) 0 0 / 2px 2px;
}
.sheet-tabs svg { position: absolute; left: 8px; top: 0; }
.sheet-tabs button { position: relative; height: 17px; }
.splitter { flex: none; width: 7px; display: flex; padding-top: 264px; }
.splitter i { width: 6px; height: 100px; border: 1px solid #888; background: #f8f8f8; }

/* scroll bars */
.hscroll { height: 16px; background: #f0f0f0; display: flex; align-items: center; padding: 0 4px; gap: 6px; }
.vscroll { width: 16px; background: #f0f0f0; display: flex; flex-direction: column; align-items: center; padding: 6px 0; gap: 4px; }
.thumb { background: #cdcdcd; }
.hscroll .thumb { height: 16px; }
.vscroll .thumb { width: 15px; height: 17px; }
.t17 { width: 17px; }
.t103 { width: 104px; }
.end { margin-left: auto; }
.vscroll .end { margin: auto 0 0; }
.ah { width: 8px; height: 10px; }
.av { width: 10px; height: 8px; }

/* grids */
.content { flex: 1; min-width: 0; display: flex; flex-direction: column; }
.grid-box { border: 1px solid #a5a9ae; background: #fff; padding: 1px; display: grid; grid-template: minmax(0, 1fr) 16px / minmax(0, 1fr) 16px; }
.grid-box .hscroll { grid-column: 1 / 3; padding-right: 20px; }
.grid-view { overflow: hidden; }
.top-grid { flex: none; height: 167px; }
.sheet { border-collapse: separate; border-spacing: 0; table-layout: fixed; width: 100%; line-height: 16px; }
.sheet th, .sheet td { height: 19px; padding: 0 2px; border: 1px solid #c0c0c0; border-width: 0 1px 1px 0; overflow: hidden; white-space: nowrap; }
.sheet th { background: #f0f0f0; font-weight: normal; padding: 0; }
.sheet thead th { height: 21px; }
.sheet .r { text-align: right; padding-right: 3px; }
.sheet .l { text-align: left; }
.sheet .total { text-align: right; padding-right: 16px; }
.sheet .lock { text-align: left; padding-left: 3px; }
.sheet .hot { background: linear-gradient(#fadb9f, #f2c164); }
.sheet .cur { background: #ffd388; }
.sheet .hit { background: #d9eaf8; }
.sheet .n, .sheet tbody th, .sheet .code, .kid, .root { font-family: "DejaVu Sans Mono", monospace; font-size: 10px; }
.top-grid .sheet td, .top-grid .sheet tbody th { height: 20px; }
.top-grid .sheet .tall td, .top-grid .sheet .tall th { height: 41px; }
.sel td { background: #a8dcfb; }
.c20 { width: 21px; }
.c22 { width: 23px; }
.c33 { width: 34px; }
.c38 { width: 38px; }
.c41 { width: 41px; }
.c49 { width: 49px; }
.c55 { width: 54px; }
.c57 { width: 57px; }
.c62 { width: 62px; }
.c66 { width: 66px; }
.c75 { width: 75px; }
.c80 { width: 81px; }
.c81 { width: 81px; }
.c97 { width: 97px; }
.c119 { width: 119px; }
.c120 { width: 120px; }
.c124 { width: 124px; }
.c127 { width: 127px; }
.c268 { width: 269px; }
.pm { width: 13px; height: 13px; border: 1px solid #aaa; background: #fff; font: 14px/10px "Liberation Sans", sans-serif; margin-right: 4px; vertical-align: middle; }
.sheet .root { padding-left: 12px; }
.sheet .kid { padding: 0; }
.kid::before { content: ""; display: inline-block; width: 17px; height: 20px; margin: -10px 4px 0 18px; border: solid #bbb; border-width: 0 0 1px 1px; vertical-align: middle; }
.low td { text-align: center; }
.low td:last-child, .low th:last-child { border-right: 0; }
.sheet.low .code { text-align: left; padding-left: 20px; }
.sheet.low .code:has(.pm) { padding-left: 3px; }
.low .box { margin: 0 auto; }
.view-bar { flex: none; height: 32px; display: flex; align-items: center; padding: 6px 0 0 2px; gap: 6px; }
.view-bar .down, .dlg-tabs .on span {
  border: solid; border-width: 2px 1px 1px 2px; border-color: #777 #fff #fff #777;
  background: repeating-conic-gradient(#e9e9e9 0 25%, #fafafa 0 50%) 0 0 / 2px 2px;
}
.view-bar .down { padding: 0 4px; height: 19px; line-height: 16px; }
.view-bar .sep { height: 20px; margin-right: 3px; }
.lower { flex: 1; min-height: 0; display: flex; }
.bottom-grid { flex: 1; min-width: 0; margin-bottom: 1px; padding-bottom: 2px; }

/* right-hand actions */
.actions { flex: none; width: 128px; padding: 4px 6px 0 7px; }
.action-grid { display: grid; grid-template-columns: 48px 48px; gap: 6px; padding-left: 4px; }
.btn { height: 23px; border: 1px solid #adadad; background: #e1e1e1; line-height: 18px; padding-bottom: 2px; }
.wide { grid-column: 1 / 3; }
fieldset { margin: 3px 0 0; border: 1px solid #dcdcdc; height: 98px; padding: 5px 0 0; display: grid; grid-template-columns: 67px 1fr; grid-auto-rows: 23px; }
legend { padding: 0 2px; margin-left: 5px; }
fieldset label { display: flex; align-items: center; gap: 3px; }
input[type="radio"] { appearance: none; width: 13px; height: 13px; border: 1px solid #444; border-radius: 50%; background: #fff; }
input[type="radio"]:checked { background: radial-gradient(circle, #222 3px, #fff 4px); }

/* status */
.status { flex: none; height: 21px; display: grid; grid-template-columns: 331fr 345fr 268fr 208fr 208fr; gap: 2px; padding-right: 1px; background: #fafafa; }
.status span { border: 1px solid #d0d0d0; background: linear-gradient(#fcfcfc, #efefef); padding-left: 1px; line-height: 18px; white-space: nowrap; overflow: hidden; }

/* taskbar */
.taskbar { flex: none; height: 40px; background: #04151b; display: flex; align-items: center; color: #fff; }
.start { width: 48px; height: 40px; background: #000; display: flex; align-items: center; justify-content: center; }
.search { width: 344px; height: 40px; background: #f2f2f2; display: flex; align-items: center; gap: 8px; padding: 0 14px 0 9px; color: #333; }
.search input { flex: 1; min-width: 0; border: 0; padding: 0; background: none; outline: 0; font-size: 14px; }
.search input::placeholder { color: #333; opacity: 1; }
.task { width: 51px; height: 40px; display: flex; align-items: center; justify-content: center; }
.live { width: 48px; background: #36454b; border-bottom: 2px solid #76b9ed; }
.band { margin-left: auto; width: 17px; height: 40px; background: #f0f0f0; display: flex; flex-direction: column; align-items: center; justify-content: space-between; padding: 5px 0; }
.links { margin-left: 10px; }
.people { margin: 0 36px 0 25px; }
.cpu, .clock { font-family: "Open Sans", "Noto Sans CJK SC", sans-serif; text-align: center; white-space: nowrap; }
.cpu { width: 48px; }
.tray { display: flex; align-items: center; gap: 9px; margin-left: 18px; }
.clock { width: 64px; margin-left: 14px; line-height: 19px; }
.notes { margin: 0 4px 0 16px; border-right: 1px solid #888; padding-right: 10px; height: 40px; }
.note-num { font: bold 13px "Liberation Sans", sans-serif; fill: #fff; }

/* query dialog */
.dialog { position: absolute; left: 320px; top: 90px; width: 853px; height: 514px; border: 1px solid #318ee8; background: #f0f0f0; display: flex; flex-direction: column; box-shadow: 0 4px 16px #0006; }
.dlg-title { flex: none; height: 31px; background: #fff; display: flex; align-items: center; padding: 0 0 2px 8px; gap: 5px; }
.dlg-title .win-controls button { height: 28px; }
.dlg-tabs { flex: none; height: 27px; display: flex; align-items: center; }
.dlg-tabs > button { height: 21px; border-right: 1px solid #999; padding: 0 12px 5px 9px; line-height: 16px; }
.dlg-tabs > button:first-child { padding-left: 7px; }
.dlg-tabs > .roomy { padding-right: 17px; }
.dlg-tabs > .on { padding: 0 5px; }
.dlg-tabs .on span { display: block; height: 20px; padding: 0 9px 0 5px; line-height: 17px; }
.dlg-actions { margin: 2px 0 0 auto; display: flex; gap: 3px; }
.dlg-actions .btn { width: 74px; }
.dlg-actions .btn:last-child { width: 70px; border-right: 0; }
.dlg-body { flex: 1; min-height: 0; display: flex; gap: 3px; }
.chapter { flex: none; width: 216px; display: flex; flex-direction: column; }
.chapter select {
  flex: none; height: 20px; appearance: none; border: 1px solid #adadad; border-radius: 0; padding: 0 18px 2px 2px; line-height: 16px;
  background: linear-gradient(45deg, transparent 50%, #555 50% 62%, transparent 62%) right 8px top 7px / 5px 5px no-repeat,
    linear-gradient(-45deg, transparent 50%, #555 50% 62%, transparent 62%) right 4px top 7px / 5px 5px no-repeat, #e4e4e4;
}
.page-tabs { flex: none; display: flex; align-items: flex-end; height: 23px; margin-left: 1px; }
.page-tabs button { height: 19px; padding: 0 4px 2px; border: 1px solid #dcdcdc; border-bottom: 0; }
.page-tabs .on { height: 21px; padding: 0 8px 3px 6px; background: #fff; }
.page { flex: 1; min-height: 0; display: flex; flex-direction: column; background: #f0f0f0; border: solid #fff; border-width: 2px 3px 3px 4px; }
.tree-box { flex: 1; min-height: 0; background: #fff; border: 1px solid #828790; padding: 1px 2px; display: grid; grid-template: minmax(0, 1fr) 16px / minmax(0, 1fr) 16px; }
.tree-box .hscroll { margin-right: 14px; grid-column: 1 / 3; }
.tree { overflow: hidden; white-space: nowrap; padding-left: 1px; }
.tree div { display: flex; height: 16px; line-height: 16px; }
.tree i { width: 19px; height: 16px; position: relative; }
.tree i:last-of-type { margin-right: 3px; }
.g { background: repeating-linear-gradient(#888 0 1px, transparent 1px 2px) 10px 0 / 1px 16px no-repeat; }
.tick::after { content: ""; position: absolute; left: 11px; top: 8px; width: 9px; border-top: 1px dotted #888; }
.more::before, .open::before { content: ""; position: absolute; left: 5px; top: 5px; width: 6px; height: 6px; border: solid #a0a0a0; border-width: 2px 2px 0 0; transform: rotate(45deg); }
.open::before { left: 6px; top: 3px; border-color: #505050; transform: rotate(135deg); }
.tree span { background: #cce8ff; padding: 0 4px 0 3px; margin-left: -3px; }
.vscroll .long { height: 199px; margin-top: 27px; }
.scope { flex: none; height: 38px; display: flex; align-items: center; padding: 0 0 2px 11px; gap: 21px; }
.scope label { display: flex; align-items: center; gap: 8px; }
.scope input[type="radio"] { width: 11px; height: 11px; border-color: #999; }
.quota { flex: 1; min-width: 0; background: #fff; border: 1px solid #a5a9ae; border-right: 0; padding: 0 0 0 1px; }
.quota .sheet { width: 555px; }
.marks { position: absolute; left: 0; top: 0; pointer-events: none; }
```
